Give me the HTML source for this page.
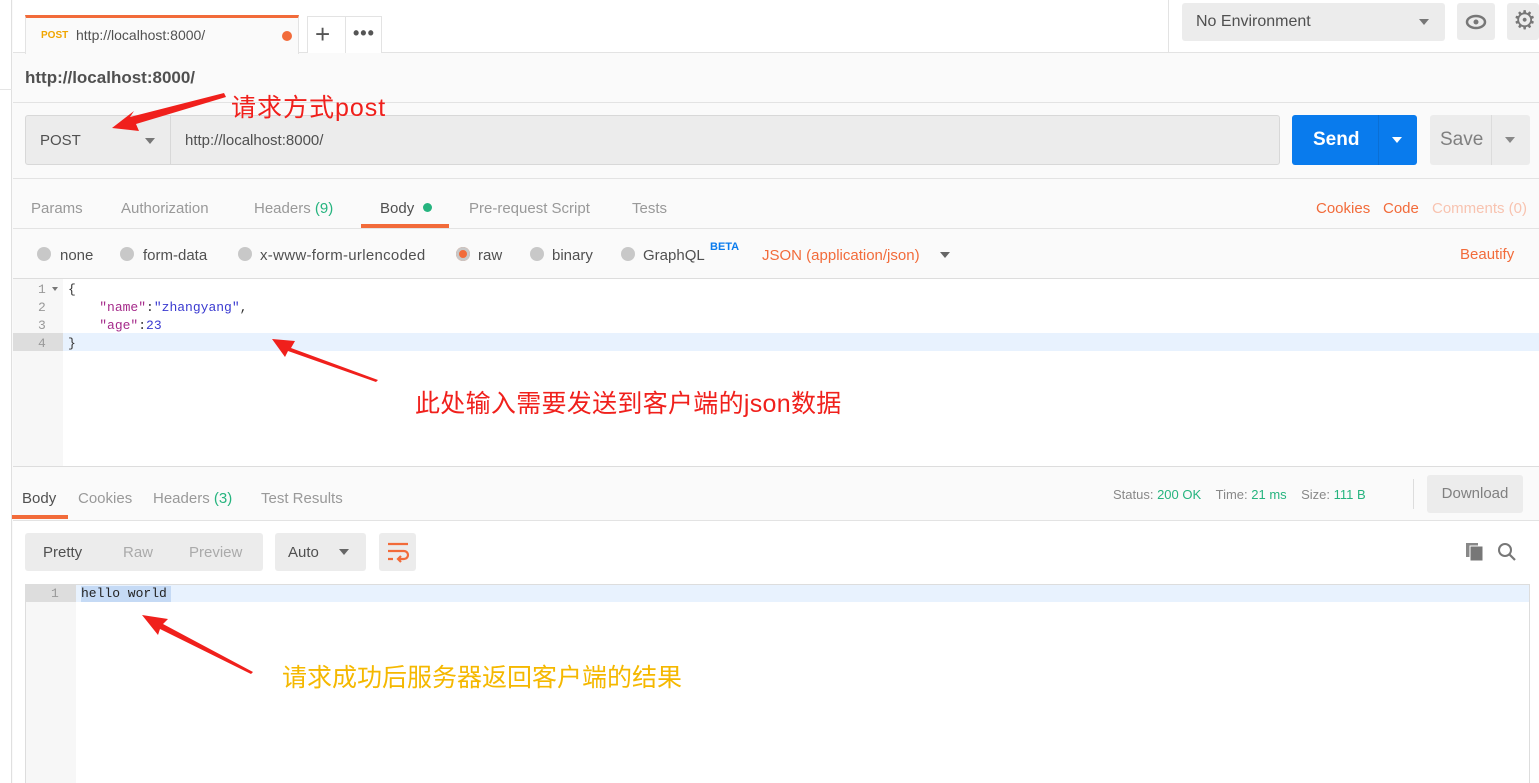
<!DOCTYPE html>
<html><head><meta charset="utf-8"><style>
*{box-sizing:border-box;margin:0;padding:0}
body{width:1539px;height:783px;overflow:hidden;background:#fafafa;font-family:"Liberation Sans","Noto Sans CJK SC",sans-serif;position:relative;color:#505050}
.a{position:absolute}
.mono{font-family:"Liberation Mono","DejaVu Sans Mono",monospace;font-size:13px}
.t{font-size:15px;color:#999}
.rad{position:absolute;top:247px;width:14px;height:14px;border-radius:50%;background:#c8c8c8}
.rl{position:absolute;top:247px;font-size:15px;color:#505050;white-space:nowrap}
</style></head><body>
<div class="a" style="left:0;top:0;width:12px;height:783px;background:#fff;border-right:1px solid #e0e0e0"></div>
<div class="a" style="left:0;top:89px;width:12px;height:1px;background:#e5e5e5"></div>
<div class="a" style="left:13px;top:0;width:1526px;height:53px;background:#fff;border-bottom:1px solid #e3e3e3"></div>
<div class="a" style="left:25px;top:15px;width:274px;height:39px;background:#fafafa;border-top:3px solid #f26b3a;border-left:1px solid #e3e3e3;border-right:1px solid #e3e3e3"></div>
<div class="a" style="left:41px;top:30px;font-size:10px;font-weight:bold;color:#f0a500">POST</div>
<div class="a" style="left:76px;top:27px;font-size:14px;color:#505050">http://localhost:8000/</div>
<div class="a" style="left:282px;top:31px;width:10px;height:10px;border-radius:50%;background:#f26b3a"></div>
<div class="a" style="left:307px;top:16px;width:75px;height:37px;border:1px solid #e3e3e3;border-bottom:none;background:#fff"></div>
<div class="a" style="left:345px;top:16px;width:1px;height:37px;background:#e3e3e3"></div>
<div class="a" style="left:315px;top:19px;font-size:26px;color:#555;line-height:30px">+</div>
<div class="a" style="left:353px;top:23px;font-size:18px;color:#555;letter-spacing:1px;font-weight:bold">•••</div>
<div class="a" style="left:1168px;top:0;width:1px;height:53px;background:#e3e3e3"></div>
<div class="a" style="left:1182px;top:3px;width:263px;height:38px;background:#ececec;border-radius:3px"></div>
<div class="a" style="left:1196px;top:13px;font-size:16px;color:#505050">No Environment</div>
<div class="a" style="left:1419px;top:19px;border:5px solid transparent;border-top:6px solid #777"></div>
<div class="a" style="left:1457px;top:3px;width:38px;height:37px;background:#ececec;border-radius:3px"></div>
<svg class="a" style="left:1465px;top:12px" width="22" height="20"><ellipse cx="11" cy="10" rx="9" ry="6" fill="none" stroke="#777" stroke-width="2.5"/><circle cx="11" cy="10" r="2.5" fill="#777"/></svg>
<div class="a" style="left:1507px;top:3px;width:32px;height:37px;background:#ececec;border-radius:3px"></div>
<div class="a" style="left:1513px;top:5px;font-size:26px;color:#777">⚙</div>
<div class="a" style="left:25px;top:68px;font-size:17px;font-weight:bold;color:#505050">http://localhost:8000/</div>
<div class="a" style="left:13px;top:102px;width:1526px;height:1px;background:#e3e3e3"></div>
<div class="a" style="left:25px;top:115px;width:1255px;height:50px;background:#ececec;border:1px solid #d8d8d8;border-radius:3px"></div>
<div class="a" style="left:170px;top:116px;width:1px;height:48px;background:#d8d8d8"></div>
<div class="a" style="left:40px;top:132px;font-size:15px;color:#505050">POST</div>
<div class="a" style="left:145px;top:138px;border:5px solid transparent;border-top:6px solid #777"></div>
<div class="a" style="left:185px;top:132px;font-size:15px;color:#505050">http://localhost:8000/</div>
<div class="a" style="left:1292px;top:115px;width:125px;height:50px;background:#097bed;border-radius:3px"></div>
<div class="a" style="left:1378px;top:115px;width:1px;height:50px;background:#0a6fd5"></div>
<div class="a" style="left:1313px;top:129px;font-size:19px;font-weight:bold;color:#fff">Send</div>
<div class="a" style="left:1392px;top:137px;border:5px solid transparent;border-top:6px solid #fff"></div>
<div class="a" style="left:1430px;top:115px;width:100px;height:50px;background:#ececec;border-radius:3px"></div>
<div class="a" style="left:1491px;top:115px;width:1px;height:50px;background:#dcdcdc"></div>
<div class="a" style="left:1440px;top:129px;font-size:19px;color:#808080">Save</div>
<div class="a" style="left:1505px;top:137px;border:5px solid transparent;border-top:6px solid #888"></div>
<div class="a" style="left:13px;top:178px;width:1526px;height:1px;background:#e3e3e3"></div>
<div class="a t" style="left:31px;top:200px">Params</div>
<div class="a t" style="left:121px;top:200px">Authorization</div>
<div class="a t" style="left:254px;top:200px">Headers <span style="color:#26b47f">(9)</span></div>
<div class="a t" style="left:380px;top:200px;color:#505050">Body&nbsp; <span style="display:inline-block;width:9px;height:9px;border-radius:50%;background:#26b47f;vertical-align:1px"></span></div>
<div class="a" style="left:361px;top:224px;width:88px;height:4px;background:#f26b3a"></div>
<div class="a t" style="left:469px;top:200px">Pre-request Script</div>
<div class="a t" style="left:632px;top:200px">Tests</div>
<div class="a t" style="left:1316px;top:200px;color:#f26b3a">Cookies</div>
<div class="a t" style="left:1383px;top:200px;color:#f26b3a">Code</div>
<div class="a t" style="left:1432px;top:200px;color:#f8c3b0">Comments (0)</div>
<div class="a" style="left:13px;top:228px;width:1526px;height:1px;background:#e3e3e3"></div>
<span class="rad" style="left:37px"></span><span class="rl" style="left:60px">none</span>
<span class="rad" style="left:120px"></span><span class="rl" style="left:143px">form-data</span>
<span class="rad" style="left:238px"></span><span class="rl" style="left:260px;letter-spacing:0.3px">x-www-form-urlencoded</span>
<span class="rad" style="left:456px;background:#f26b3a;box-shadow:inset 0 0 0 3px #c8c8c8"></span><span class="rl" style="left:478px">raw</span>
<span class="rad" style="left:530px"></span><span class="rl" style="left:552px">binary</span>
<span class="rad" style="left:621px"></span><span class="rl" style="left:643px">GraphQL</span>
<span class="a" style="left:710px;top:241px;color:#097bed;font-size:11px;font-weight:bold">BETA</span>
<span class="rl" style="left:762px;color:#f26b3a">JSON (application/json)</span>
<div class="a" style="left:940px;top:252px;border:5px solid transparent;border-top:6px solid #666"></div>
<div class="a t" style="left:1460px;top:246px;color:#f26b3a">Beautify</div>
<div class="a" style="left:13px;top:278px;width:1526px;height:1px;background:#ddd"></div>
<div class="a" style="left:13px;top:279px;width:1526px;height:187px;background:#fff"></div>
<div class="a" style="left:13px;top:279px;width:50px;height:187px;background:#f7f7f7"></div>
<div class="a" style="left:13px;top:333px;width:1526px;height:18px;background:#e8f2fe"></div>
<div class="a" style="left:13px;top:333px;width:50px;height:18px;background:#ddd"></div>
<div class="a mono" style="left:38px;top:281px;line-height:18px;color:#999">1<br>2<br>3<br>4</div>
<div class="a" style="left:52px;top:287px;border:3px solid transparent;border-top:4px solid #777"></div>
<div class="a mono" style="left:68px;top:281px;line-height:18px;color:#333;white-space:pre">{
    <span style="color:#a52a8a">"name"</span>:<span style="color:#3a3ad0">"zhangyang"</span>,
    <span style="color:#a52a8a">"age"</span>:<span style="color:#3a3ad0">23</span>
}</div>
<div class="a" style="left:13px;top:466px;width:1526px;height:1px;background:#ddd"></div>
<div class="a t" style="left:22px;top:490px;color:#505050">Body</div>
<div class="a" style="left:12px;top:515px;width:56px;height:4px;background:#f26b3a"></div>
<div class="a t" style="left:78px;top:490px">Cookies</div>
<div class="a t" style="left:153px;top:490px">Headers <span style="color:#26b47f">(3)</span></div>
<div class="a t" style="left:261px;top:490px">Test Results</div>
<div class="a" style="left:1113px;top:487px;font-size:13px;color:#888;white-space:nowrap">Status: <span style="color:#26b47f">200 OK</span>&nbsp;&nbsp;&nbsp;&nbsp;Time: <span style="color:#26b47f">21 ms</span>&nbsp;&nbsp;&nbsp;&nbsp;Size: <span style="color:#26b47f">111 B</span></div>
<div class="a" style="left:1413px;top:479px;width:1px;height:30px;background:#ddd"></div>
<div class="a" style="left:1427px;top:475px;width:96px;height:38px;background:#ececec;border-radius:3px;font-size:15px;color:#808080;text-align:center;line-height:38px">Download</div>
<div class="a" style="left:13px;top:520px;width:1526px;height:1px;background:#e3e3e3"></div>
<div class="a" style="left:13px;top:521px;width:1526px;height:262px;background:#fff"></div>
<div class="a" style="left:25px;top:533px;width:238px;height:38px;background:#ececec;border-radius:3px"></div>
<div class="a t" style="left:43px;top:544px;color:#505050">Pretty</div>
<div class="a t" style="left:123px;top:544px;color:#aaa">Raw</div>
<div class="a t" style="left:189px;top:544px;color:#aaa">Preview</div>
<div class="a" style="left:275px;top:533px;width:91px;height:38px;background:#ececec;border-radius:3px"></div>
<div class="a t" style="left:288px;top:544px;color:#505050">Auto</div>
<div class="a" style="left:339px;top:549px;border:5px solid transparent;border-top:6px solid #666"></div>
<div class="a" style="left:379px;top:533px;width:37px;height:38px;background:#ececec;border-radius:3px"></div>
<svg class="a" style="left:386px;top:541px" width="24" height="22"><path d="M2 3H22M2 10H18a4 4 0 0 1 0 8H12M15 15l-3 3 3 3M2 18H7" fill="none" stroke="#f26b3a" stroke-width="2.2"/></svg>
<svg class="a" style="left:1465px;top:542px" width="20" height="20"><rect x="1" y="1" width="12" height="14" fill="#888"/><rect x="5" y="4" width="13" height="15" fill="#777" stroke="#fff" stroke-width="1"/></svg>
<svg class="a" style="left:1497px;top:542px" width="20" height="20"><circle cx="8" cy="8" r="6" fill="none" stroke="#777" stroke-width="2"/><path d="M12.5 12.5L18 18" stroke="#777" stroke-width="2.2"/></svg>
<div class="a" style="left:25px;top:584px;width:1505px;height:199px;border:1px solid #ddd;border-bottom:none;background:#fff"></div>
<div class="a" style="left:26px;top:585px;width:50px;height:198px;background:#f7f7f7"></div>
<div class="a" style="left:26px;top:585px;width:1503px;height:17px;background:#e8f2fe"></div>
<div class="a" style="left:26px;top:585px;width:50px;height:17px;background:#ddd"></div>
<div class="a mono" style="left:51px;top:586px;color:#999">1</div>
<div class="a" style="left:81px;top:586px;width:90px;height:16px;background:#c5daf5"></div>
<div class="a mono" style="left:81px;top:586px;color:#222">hello world</div>
<svg class="a" style="left:0;top:0" width="1539" height="783">
<polygon points="224,93 130,117 134,111 112,128 139,131 136,124 226,97" fill="#f0201c"/>
<polygon points="378,380 291,348 295,341 272,339 285,357 288,351 376,382" fill="#f0201c"/>
<polygon points="253,672 163,624 168,619 142,615 158,635 160,629 251,674" fill="#f0201c"/>
</svg>
<div class="a" style="left:231px;top:88px;font-size:25px;color:#f0201c;letter-spacing:1px">请求方式post</div>
<div class="a" style="left:415px;top:384px;font-size:25px;color:#f0201c;letter-spacing:0.3px">此处输入需要发送到客户端的json数据</div>
<div class="a" style="left:282px;top:658px;font-size:25px;color:#f5b800">请求成功后服务器返回客户端的结果</div>
</body></html>
